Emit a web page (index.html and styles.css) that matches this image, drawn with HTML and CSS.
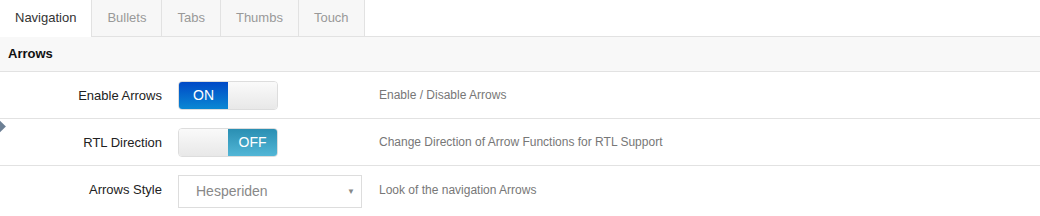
FILE: index.html
```html
<!DOCTYPE html>
<html lang="en">
<head>
    <meta charset="UTF-8">
    <title>Navigation Settings</title>
    <link rel="stylesheet" href="styles.css">
</head>
<body>
    <div class="panel">
        <div class="tabs">
            <div class="tab active">Navigation</div>
            <div class="tab">Bullets</div>
            <div class="tab">Tabs</div>
            <div class="tab">Thumbs</div>
            <div class="tab">Touch</div>
        </div>

        <div class="section-title">Arrows</div>

        <div class="row">
            <div class="label">Enable Arrows</div>
            <div class="control">
                <div class="switch">
                    <span class="side on-side">ON</span>
                    <span class="side blank"></span>
                </div>
            </div>
            <div class="desc">Enable / Disable Arrows</div>
        </div>

        <div class="row">
            <span class="marker"></span>
            <div class="label">RTL Direction</div>
            <div class="control">
                <div class="switch">
                    <span class="side blank"></span>
                    <span class="side off-side">OFF</span>
                </div>
            </div>
            <div class="desc">Change Direction of Arrow Functions for RTL Support</div>
        </div>

        <div class="row">
            <div class="label">Arrows Style</div>
            <div class="control">
                <div class="select">
                    <span>Hesperiden</span>
                    <span class="caret">&#9660;</span>
                </div>
            </div>
            <div class="desc">Look of the navigation Arrows</div>
        </div>
    </div>
</body>
</html>
```

FILE: styles.css
```css
* {
    margin: 0;
    padding: 0;
    box-sizing: border-box;
}
body {
    font-family: Arial, "Liberation Sans", sans-serif;
    background: #fff;
    width: 1040px;
    height: 216px;
    overflow: hidden;
}
.tabs {
    display: flex;
    height: 37px;
    border-bottom: 1px solid #e2e2e2;
}
.tab {
    padding: 0 15px;
    line-height: 36px;
    font-size: 13px;
    color: #999;
    background: #f7f7f7;
    border-right: 1px solid #e2e2e2;
}
.tab.active {
    background: #fff;
    color: #333;
    height: 37px;
}
.section-title {
    height: 35px;
    line-height: 34px;
    padding-left: 8px;
    background: #f8f8f8;
    border-bottom: 1px solid #e2e2e2;
    font-size: 13px;
    font-weight: bold;
    color: #111;
}
.row {
    position: relative;
    display: flex;
    align-items: center;
    height: 47px;
    border-bottom: 1px solid #e2e2e2;
}
.row:last-child {
    border-bottom: none;
}
.label {
    width: 162px;
    text-align: right;
    font-size: 13px;
    color: #222;
}
.control {
    width: 217px;
    padding-left: 16px;
}
.desc {
    font-size: 12px;
    color: #777;
}
.switch {
    display: flex;
    width: 100px;
    height: 29px;
    border: 1px solid #ddd;
    border-radius: 4px;
    overflow: hidden;
    margin-top: 1px;
}
.side {
    flex: 1;
    text-align: center;
    line-height: 27px;
    font-size: 14px;
    color: #fff;
}
.blank {
    background: linear-gradient(to bottom, #fafafa, #e8e8e8);
}
.on-side {
    background: linear-gradient(to bottom, #0049c6, #0a88d4);
}
.off-side {
    background: linear-gradient(to bottom, #2a8fb3, #52b6d6);
}
.select {
    display: flex;
    justify-content: space-between;
    align-items: center;
    width: 184px;
    height: 33px;
    border: 1px solid #ddd;
    padding: 0 6px 0 17px;
    font-size: 14px;
    color: #888;
    margin-top: 3px;
}
.caret {
    font-size: 8px;
    color: #888;
}
.marker {
    position: absolute;
    left: -5px;
    top: 3px;
    width: 9px;
    height: 9px;
    background: #6c7f94;
    transform: rotate(45deg);
}
```
